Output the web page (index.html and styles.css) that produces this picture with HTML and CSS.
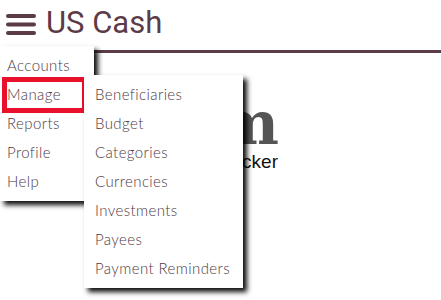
FILE: index.html
```html
<!DOCTYPE html>
<html lang="en">
<head>
    <meta charset="UTF-8">
    <meta name="viewport" content="width=device-width, initial-scale=1.0">
    <title>US Cash</title>
    <link rel="stylesheet" href="styles.css">
</head>
<body>
    <header class="topbar">
        <span class="burger">
            <svg width="30" height="22" viewBox="0 0 30 22">
                <rect x="0" y="0" width="30" height="4" rx="2" fill="#5b3b47"/>
                <rect x="0" y="8.5" width="30" height="4" rx="2" fill="#5b3b47"/>
                <rect x="0" y="17" width="30" height="4" rx="2" fill="#5b3b47"/>
            </svg>
        </span>
        <span class="brand">US Cash</span>
    </header>

    <main class="hero">
        <h1>Bloom</h1>
        <p>Expense tracker</p>
    </main>

    <!-- menu abierto -->
    <ul class="menu main-menu">
        <li>Accounts</li>
        <li class="active">Manage</li>
        <li>Reports</li>
        <li>Profile</li>
        <li>Help</li>
    </ul>
    <ul class="menu sub-menu">
        <li>Beneficiaries</li>
        <li>Budget</li>
        <li>Categories</li>
        <li>Currencies</li>
        <li>Investments</li>
        <li>Payees</li>
        <li>Payment Reminders</li>
    </ul>
</body>
</html>
```

FILE: styles.css
```css
body {
    margin: 0;
    font-family: Roboto, "Liberation Sans", sans-serif;
    background: #fff;
}
.topbar {
    display: flex;
    align-items: center;
    height: 36px;
    padding: 0 0 14px 6px;
    border-bottom: 3px solid #5b3b47;
}
.burger {
    display: flex;
    margin-top: 14px;
}
.brand {
    margin-left: 10px;
    margin-top: 8px;
    font-size: 31px;
    color: #5b3b47;
}
.hero {
    display: flex;
    flex-direction: column;
    align-items: flex-end;
    width: 278px;
    padding-top: 42px;
    white-space: nowrap;
}
.hero h1 {
    margin: 0;
    font-family: "DejaVu Serif", serif;
    font-weight: bold;
    font-size: 60px;
    line-height: 56px;
    color: #555;
    letter-spacing: -1px;
}
.hero p {
    margin: 0;
    font-family: "Liberation Sans", Arial, sans-serif;
    font-size: 19px;
    color: #111;
}
.menu {
    position: absolute;
    margin: 0;
    padding: 5px 0;
    list-style: none;
    background: #fff;
    box-shadow: 4px 4px 5px rgba(0,0,0,0.95);
    font-family: Lato, sans-serif;
    font-weight: 300;
    font-size: 15px;
    color: #4e3a43;
}
.menu li {
    height: 29px;
    line-height: 29px;
    letter-spacing: 0.4px;
}
.main-menu {
    left: 0;
    top: 46px;
    width: 87px;
    padding-left: 7px;
}
.sub-menu {
    left: 84px;
    top: 75px;
    width: 148px;
    padding-left: 11px;
}
.main-menu .active {
    position: relative;
}
.main-menu .active::after {
    content: "";
    position: absolute;
    left: -5px;
    right: 7px;
    top: -3px;
    bottom: -4px;
    border: 5px solid #e8102a;
}
```
